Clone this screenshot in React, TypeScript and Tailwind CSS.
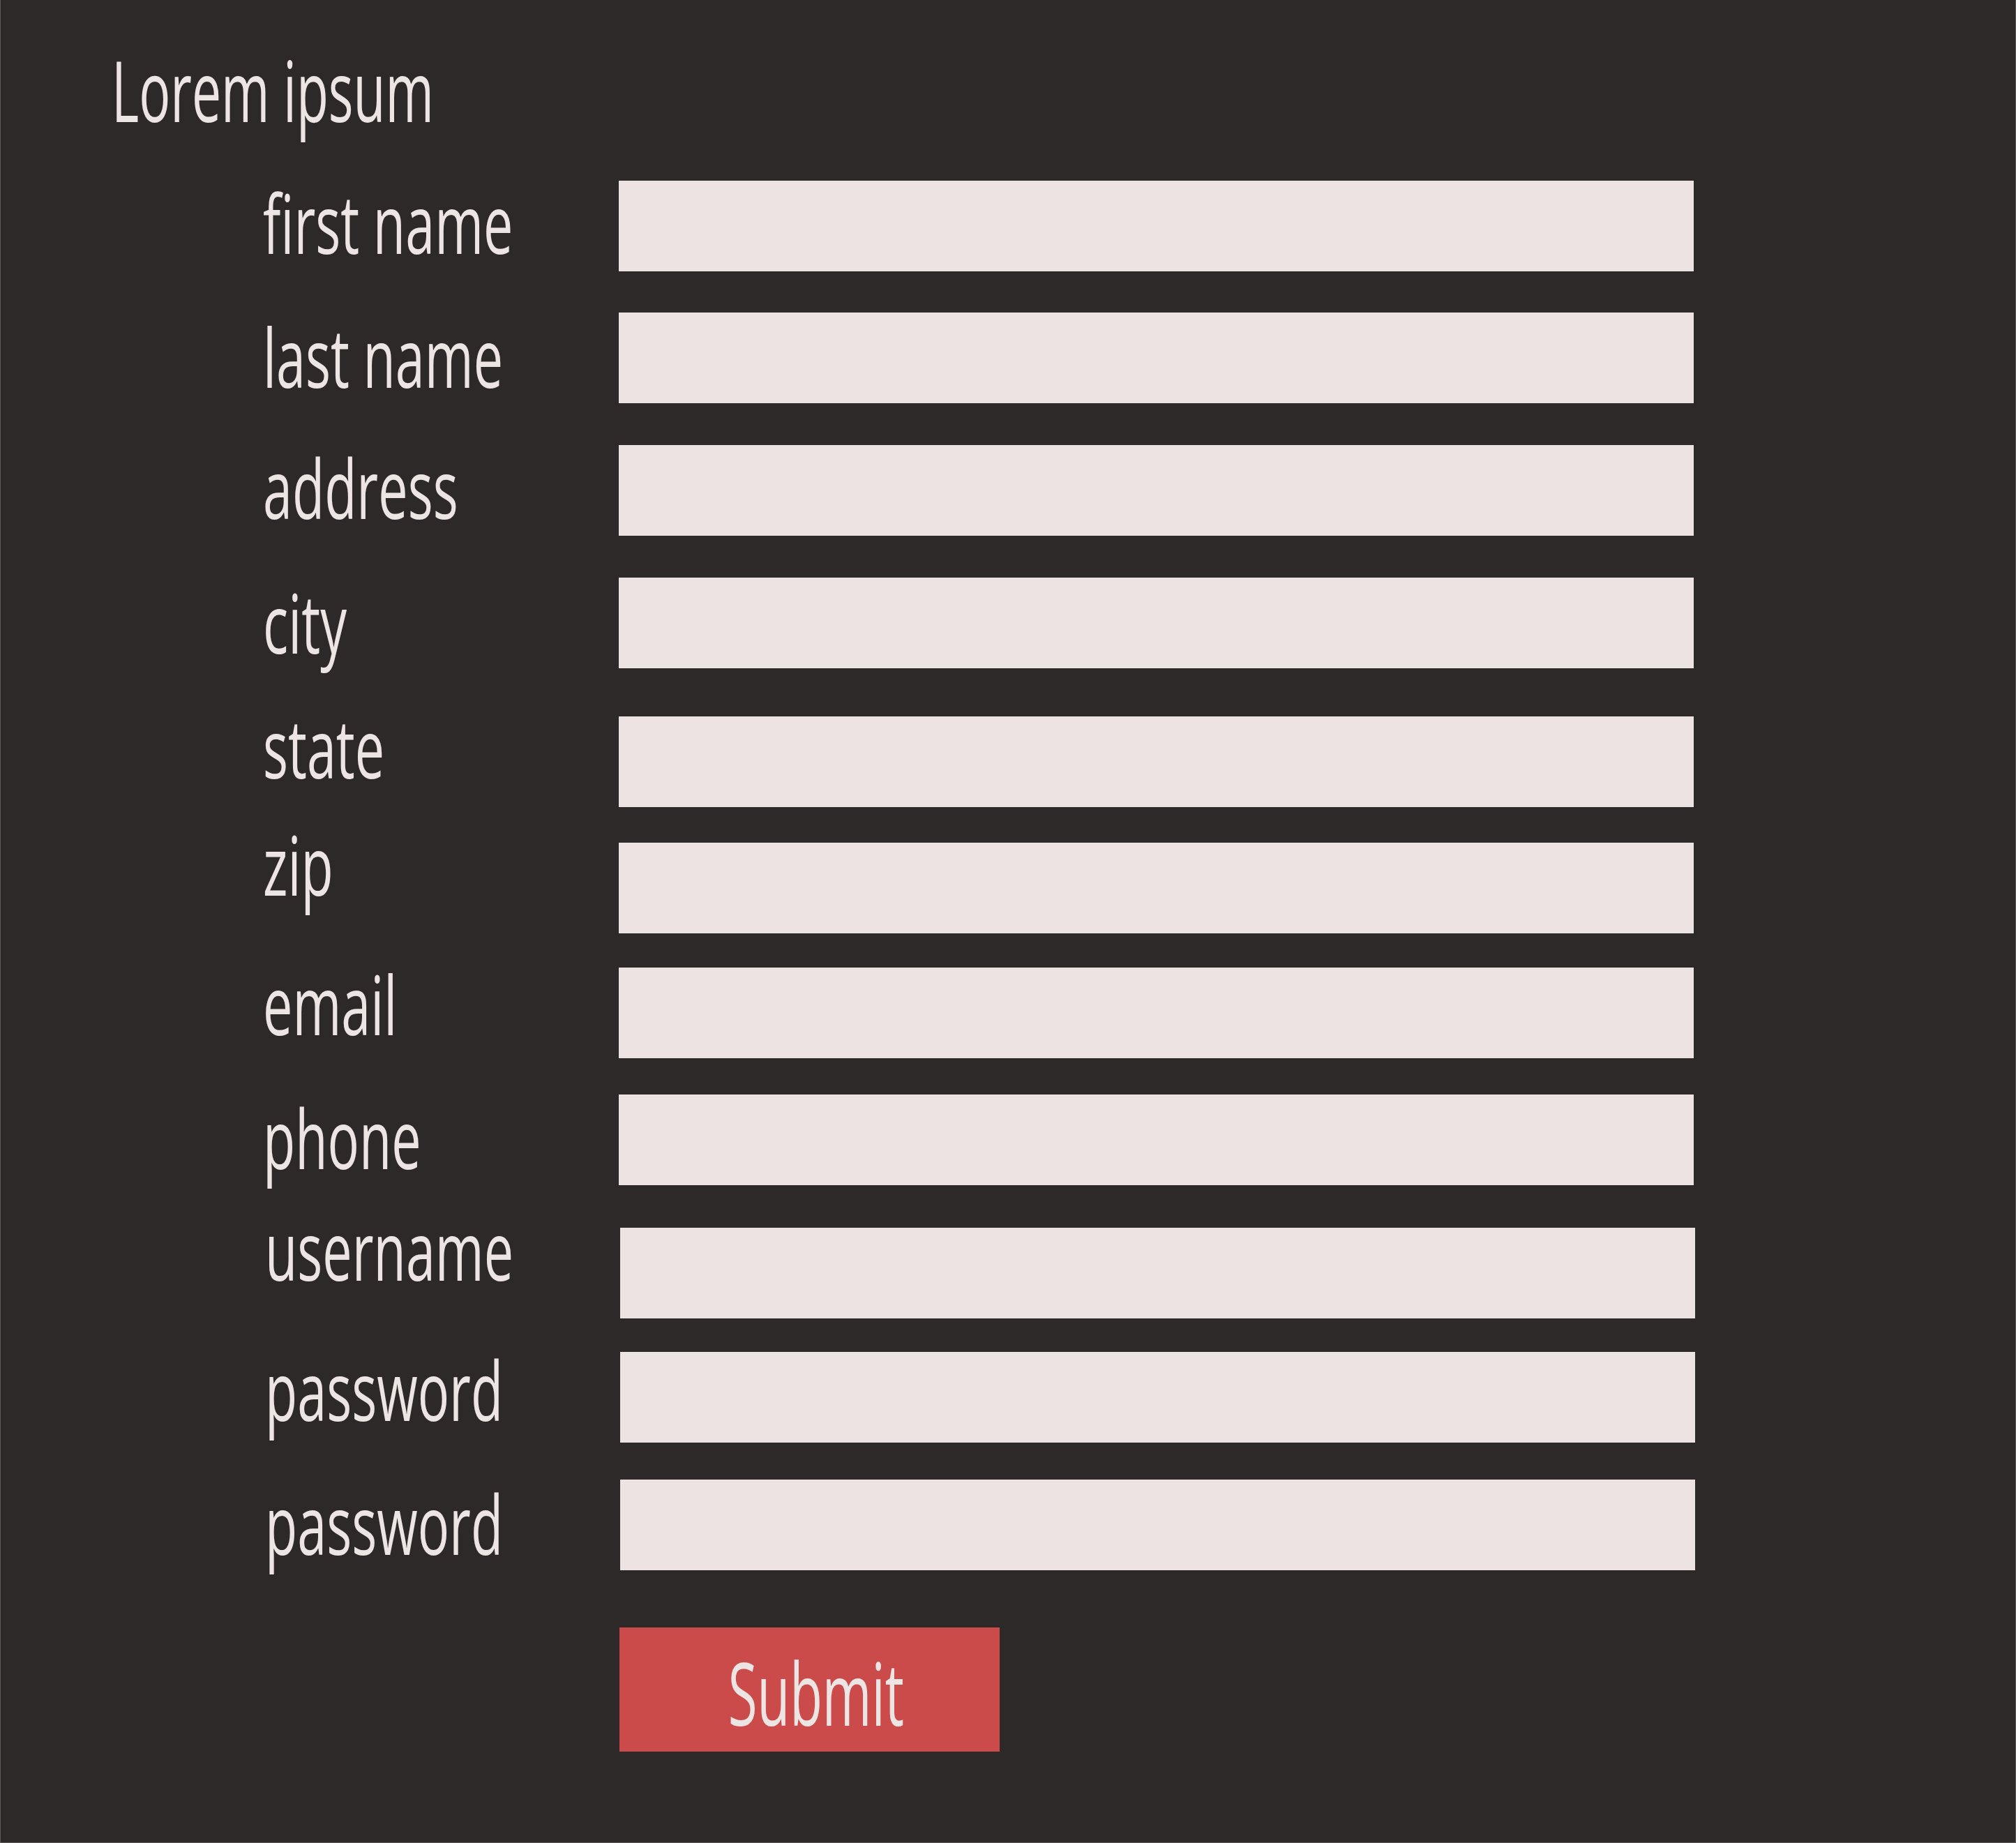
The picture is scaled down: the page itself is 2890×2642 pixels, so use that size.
import React from "react";

type Row = { label: string; rowMt: string; labelMt: string; shift: string };

const rows: Row[] = [
  { label: "first name", rowMt: "mt-[70px]", labelMt: "mt-[1px]", shift: "ml-[376px] w-[510px]" },
  { label: "last name", rowMt: "mt-[59px]", labelMt: "mt-[4px]", shift: "ml-[376px] w-[510px]" },
  { label: "address", rowMt: "mt-[60px]", labelMt: "mt-[2px]", shift: "ml-[376px] w-[510px]" },
  { label: "city", rowMt: "mt-[60px]", labelMt: "mt-[5px]", shift: "ml-[376px] w-[510px]" },
  { label: "state", rowMt: "mt-[69px]", labelMt: "-mt-[15px]", shift: "ml-[376px] w-[510px]" },
  { label: "zip", rowMt: "mt-[51px]", labelMt: "-mt-[28px]", shift: "ml-[376px] w-[510px]" },
  { label: "email", rowMt: "mt-[49px]", labelMt: "-mt-[7px]", shift: "ml-[376px] w-[510px]" },
  { label: "phone", rowMt: "mt-[52px]", labelMt: "mt-[3px]", shift: "ml-[376px] w-[510px]" },
  { label: "username", rowMt: "mt-[61px]", labelMt: "-mt-[28px]", shift: "ml-[379px] w-[509px]" },
  { label: "password", rowMt: "mt-[48px]", labelMt: "-mt-[5px]", shift: "ml-[379px] w-[509px]" },
  { label: "password", rowMt: "mt-[53px]", labelMt: "mt-[4px]", shift: "ml-[379px] w-[509px]" },
];

export default function App() {
  return (
    <div
      className="w-[2890px] h-[2642px] bg-[#2d2928] border-l border-r border-b border-[#5f5b5a] pt-[68px] text-[#ede4e4] overflow-hidden"
      style={{ fontFamily: '"Open Sans", "Noto Sans", sans-serif' }}
    >
      <div className="pl-[159px]">
        <h1 className="m-0 text-[121px] font-normal leading-none whitespace-nowrap scale-x-[0.62] origin-left">
          Lorem ipsum
        </h1>
      </div>

      <form className="flex flex-col" onSubmit={(e) => e.preventDefault()}>
        {rows.map((r, i) => (
          <div key={i} className={`flex items-start ${r.rowMt}`}>
            <label className={`shrink-0 self-start ${r.shift}`}>
              <span
                className={`block text-[118px] leading-none whitespace-nowrap scale-x-[0.64] origin-left ${r.labelMt}`}
              >
                {r.label}
              </span>
            </label>
            <input
              type={r.label === "password" ? "password" : "text"}
              aria-label={r.label}
              className="w-[1541px] h-[130px] bg-[#ece3e2] border-0 outline-none shrink-0"
            />
          </div>
        ))}
        <div className="flex mt-[82px] pl-[887px]">
          <button
            type="submit"
            className="w-[545px] h-[178px] bg-[#cb4a4a] flex items-center justify-center pl-[18px] pt-[6px] text-[#ede4e4]"
          >
            <span className="block text-[125px] leading-none whitespace-nowrap scale-x-[0.61]">
              Submit
            </span>
          </button>
        </div>
      </form>
    </div>
  );
}
